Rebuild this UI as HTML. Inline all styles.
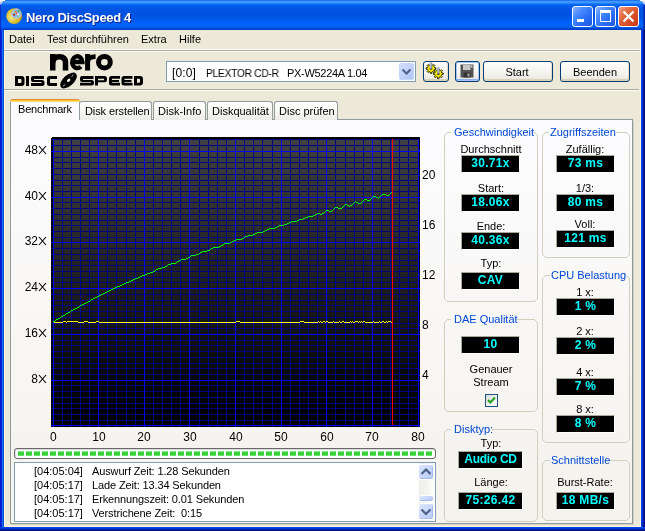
<!DOCTYPE html>
<html><head><meta charset="utf-8"><title>Nero DiscSpeed 4</title>
<style>
*{box-sizing:border-box}
html,body{margin:0;padding:0;width:645px;height:531px;overflow:hidden;background:#fff}
body{position:relative;font-family:"Liberation Sans",sans-serif;font-size:11px;color:#000}
.a{position:absolute}
.t{position:absolute;white-space:nowrap;font-size:11px;line-height:13px;will-change:transform}
.v{position:absolute;white-space:nowrap;font:bold 12px/15px "Liberation Sans",sans-serif;color:#00ffff;text-align:center;letter-spacing:0.3px;will-change:transform}
</style></head><body>
<div class="a" style="left:0;top:0;width:645px;height:531px;background:#0a3ee0;border-radius:7px 7px 0 0"></div>
<div class="a" style="left:0;top:0;width:645px;height:30px;border-radius:7px 7px 0 0;background:linear-gradient(to bottom,#0a50e0 0px,#3d95ff 1px,#3d95ff 3px,#0f70f8 4px,#0062f2 5px,#0056e4 8px,#0052df 14px,#0058e8 19px,#0062fa 22px,#0062fc 27px,#0050e0 28px,#0038b8 30px)"></div>
<div class="a" style="left:0;top:30px;width:4px;height:501px;background:linear-gradient(to right,#0018d0 0,#0018d0 1px,#0a2cd8 1px,#0a2cd8 2px,#1a70f0 2px,#1a70f0 3px,#0050e0 3px)"></div>
<div class="a" style="left:641px;top:30px;width:4px;height:501px;background:linear-gradient(to right,#0040f0 0,#0040f0 1px,#0030d0 1px,#0030d0 2px,#001a9a 2px,#001a9a 3px,#001080 3px)"></div>
<div class="a" style="left:0;top:527px;width:645px;height:4px;background:linear-gradient(to bottom,#0040f0 0,#0040f0 1px,#0035e0 1px,#0035e0 2px,#0020a0 2px,#0020a0 3px,#001480 3px)"></div>
<div class="a" style="left:4px;top:30px;width:637px;height:497px;background:#ece9d8"></div>
<div class="a" style="left:4px;top:30px;width:1px;height:497px;background:#fff6da"></div>
<div class="a" style="left:640px;top:30px;width:1px;height:497px;background:#fff5d8"></div>
<div class="a" style="left:4px;top:526px;width:637px;height:1px;background:#fff5d8"></div>
<div class="a" style="left:0;top:0;width:5px;height:1px;background:#fbf6e0"></div>
<div class="a" style="left:0;top:1px;width:3px;height:1px;background:#e0e4f4"></div>
<div class="a" style="left:0;top:2px;width:2px;height:2px;background:#b0c4f4"></div>
<div class="a" style="left:640px;top:0;width:5px;height:1px;background:#fbf6e0"></div>
<div class="a" style="left:642px;top:1px;width:3px;height:1px;background:#e0e4f4"></div>
<div class="a" style="left:643px;top:2px;width:2px;height:2px;background:#b0c4f4"></div>
<div class="a" style="left:0;top:5px;width:1px;height:25px;background:#0a30c8"></div>
<div class="a" style="left:643px;top:5px;width:2px;height:25px;background:linear-gradient(to right,#0840d8,#0020a8)"></div>
<svg class="a" style="left:4px;top:6px" width="20" height="20" viewBox="0 0 20 20">
<defs><radialGradient id="gd" cx="0.35" cy="0.55" r="0.75"><stop offset="0" stop-color="#f4ea90"/><stop offset="0.5" stop-color="#dcc030"/><stop offset="1" stop-color="#a88c10"/></radialGradient></defs>
<circle cx="10.2" cy="10.2" r="7.9" fill="url(#gd)"/>
<circle cx="12.4" cy="7.6" r="4.6" fill="#7cc0ee" stroke="#b8bcc4" stroke-width="1.3"/>
<path d="M11 4.8 L12.8 7.4 L13.8 9.4" stroke="#f07040" stroke-width="1.5" fill="none"/>
<path d="M13.6 4.6 L15.6 5.6" stroke="#30a040" stroke-width="1.3"/>
<path d="M9.6 7.8 L10.6 9.6" stroke="#c01010" stroke-width="1.5"/>
<circle cx="9.8" cy="6.4" r="0.7" fill="#f0e020"/>
<circle cx="14.2" cy="8.6" r="1" fill="#ffffff"/>
</svg>
<div class="a" style="left:26px;top:10px;font:bold 13px 'Liberation Sans',sans-serif;color:#fff;text-shadow:1px 1px 0 #0a1e8c;white-space:nowrap;letter-spacing:-0.35px;will-change:transform">Nero DiscSpeed 4</div>
<div class="a" style="left:572px;top:6px;width:21px;height:21px;border:1px solid #fff;border-radius:3px;background:linear-gradient(135deg,#8cb4ff 0%,#4a8cff 30%,#2a6cf4 65%,#1f58e0 100%)"></div>
<div class="a" style="left:595px;top:6px;width:21px;height:21px;border:1px solid #fff;border-radius:3px;background:linear-gradient(135deg,#8cb4ff 0%,#4a8cff 30%,#2a6cf4 65%,#1f58e0 100%)"></div>
<div class="a" style="left:618px;top:6px;width:21px;height:21px;border:1px solid #fff;border-radius:3px;background:linear-gradient(135deg,#f0a088 0%,#e2683e 35%,#d44a24 70%,#c83818 100%)"></div>
<div class="a" style="left:577px;top:19px;width:7px;height:3px;background:#fff"></div>
<div class="a" style="left:600px;top:10px;width:11px;height:12px;border:1px solid #fff;border-top-width:3px"></div>
<svg class="a" style="left:618px;top:6px" width="21" height="21" viewBox="0 0 21 21"><path d="M5.5 5.5 L15.5 15.5 M15.5 5.5 L5.5 15.5" stroke="#fff" stroke-width="2.2"/></svg>
<div class="t" style="left:9px;top:33px;">Datei</div>
<div class="t" style="left:47px;top:33px;">Test durchführen</div>
<div class="t" style="left:141px;top:33px;">Extra</div>
<div class="t" style="left:179px;top:33px;">Hilfe</div>
<div class="a" style="left:4px;top:49px;width:636px;height:1px;background:#fff"></div>
<div class="a" style="left:4px;top:50px;width:636px;height:1px;background:#aca899"></div>
<div class="a" style="left:4px;top:51px;width:636px;height:1px;background:#fff"></div>
<div class="a" style="left:4px;top:89px;width:635px;height:1px;background:#aca899"></div>
<div class="a" style="left:4px;top:90px;width:635px;height:1px;background:#fff"></div>
<svg class="a" style="left:0;top:0" width="160" height="95" viewBox="0 0 160 95">
<g fill="none" stroke="#000">
<path d="M52.75 70.5 V54" stroke-width="5.5"/>
<path d="M52.75 63 Q52.75 56.75 59.2 56.75 Q65.5 56.75 65.5 62.5 V70.5" stroke-width="5.5"/>
<path d="M72.2 62 H82.4 A5.1 5.9 0 1 0 80.8 66.5" stroke-width="4.4"/>
<path d="M87.6 70.5 V54" stroke-width="5"/>
<path d="M87.6 62 Q88 56.6 95.6 56.6" stroke-width="4.6"/>
<ellipse cx="104.4" cy="62.2" rx="5.9" ry="5.8" stroke-width="5"/>
</g>
<g fill="#000">
<!-- D -->
<path d="M15 76 H21.5 Q24.5 76 24.5 79 V83 Q24.5 86 21.5 86 H15 Z M18 79 V83 H20.5 Q21.5 83 21.5 82 V80 Q21.5 79 20.5 79 Z" fill-rule="evenodd"/>
<rect x="26" y="76" width="3" height="10"/>
<!-- S -->
<path d="M33 76 H44 V79 H34 V80 H42 Q44.5 80 44.5 82.5 V83.5 Q44.5 86 42 86 H31 V83 H41.5 V82 H33 Q31 82 31 80 V78 Q31 76 33 76 Z"/>
<!-- C -->
<path d="M49.5 76 H57 V79 H50 V83 H57 V86 H49.5 Q47 86 47 83.5 V78.5 Q47 76 49.5 76 Z"/>
<!-- S -->
<path d="M82 76 H93.5 V79 H83 V80 H91.5 Q94 80 94 82.5 V83.5 Q94 85.5 91.5 85.5 H80 V82.8 H91 V82 H82 Q80 82 80 80 V78 Q80 76 82 76 Z"/>
<!-- P -->
<path d="M95 76 H104.5 Q107 76 107 78.5 V80 Q107 82.3 104.5 82.3 H98 V85.5 H95 Z M98 78.7 V80.2 H104 V78.7 Z" fill-rule="evenodd"/>
<!-- E -->
<path d="M111.5 76 H120 V78.7 H112 V80 H119 V82 H112 V82.8 H120 V85.5 H111.5 Q109 85.5 109 83 V78.5 Q109 76 111.5 76 Z"/>
<path d="M124 76 H132.5 V78.7 H124.5 V80 H131.5 V82 H124.5 V82.8 H132.5 V85.5 H124 Q121.5 85.5 121.5 83 V78.5 Q121.5 76 124 76 Z"/>
<!-- D -->
<path d="M134 76 H140 Q143 76 143 79 V82.5 Q143 85.5 140 85.5 H134 Z M137 78.7 V82.8 H139 Q140 82.8 140 81.8 V79.7 Q140 78.7 139 78.7 Z" fill-rule="evenodd"/>
</g>
<g transform="rotate(-42 68.5 80.5)">
<ellipse cx="68.5" cy="80.5" rx="10.2" ry="5.3" fill="#000"/>
<ellipse cx="68.8" cy="80.5" rx="2" ry="1.3" fill="#f4f2ea"/>
<path d="M60.5 81.2 H63.5 M73.5 79.6 H76" stroke="#e8e6dc" stroke-width="0.8"/>
</g>
</svg>
<div class="a" style="left:166px;top:61px;width:250px;height:21px;border:1px solid #7f9db9;background:#fff"></div>
<div class="t" style="left:172px;top:67px;font-size:12px;letter-spacing:0.1px">[0:0]</div>
<div class="t" style="left:206px;top:67px;letter-spacing:-0.3px;transform:scaleX(0.93);transform-origin:0 0">PLEXTOR CD-R</div>
<div class="t" style="left:287px;top:67px;letter-spacing:-0.3px">PX-W5224A 1.04</div>
<div class="a" style="left:399px;top:63px;width:15px;height:17px;border-radius:2px;background:linear-gradient(135deg,#d2defc 0%,#c0d2fa 50%,#b0c6f6 100%);border:1px solid #c8d6fa"></div>
<svg class="a" style="left:399px;top:63px" width="15" height="17" viewBox="0 0 15 17"><path d="M3.5 6.5 L7.5 10.5 L11.5 6.5" stroke="#4d6185" stroke-width="2" fill="none"/></svg>
<div class="a" style="left:423px;top:61px;width:26px;height:21px;border:1px solid #003c74;border-radius:3px;background:linear-gradient(to bottom,#fff 0%,#f4f3ee 60%,#e8e6dc 100%);box-shadow: inset 0 -2px 0 #d8d2bd, inset -1px 0 0 #e2ddc8;"></div>
<div class="a" style="left:455px;top:61px;width:25px;height:21px;border:1px solid #003c74;border-radius:3px;background:linear-gradient(to bottom,#fff 0%,#f4f3ee 60%,#e8e6dc 100%);box-shadow: inset 0 0 0 1px #a8c4f8, inset 0 -2px 0 #8cb0f0;"></div>
<div class="a" style="left:483px;top:61px;width:70px;height:21px;border:1px solid #003c74;border-radius:3px;background:linear-gradient(to bottom,#fff 0%,#f4f3ee 60%,#e8e6dc 100%);box-shadow: inset 0 -2px 0 #d8d2bd, inset -1px 0 0 #e2ddc8;"></div>
<div class="t" style="left:457.0px;width:120px;text-align:center;top:66px;">Start</div>
<div class="a" style="left:560px;top:61px;width:70px;height:21px;border:1px solid #003c74;border-radius:3px;background:linear-gradient(to bottom,#fff 0%,#f4f3ee 60%,#e8e6dc 100%);box-shadow: inset 0 -2px 0 #d8d2bd, inset -1px 0 0 #e2ddc8;"></div>
<div class="t" style="left:535.0px;width:120px;text-align:center;top:66px;">Beenden</div>
<svg class="a" style="left:423px;top:61px" width="26" height="21" viewBox="0 0 26 21">
<path d="M11.52,6.73 L12.95,6.81 L12.95,8.19 L11.52,8.27 L11.03,9.44 L11.99,10.52 L11.02,11.49 L9.94,10.53 L8.77,11.02 L8.69,12.45 L7.31,12.45 L7.23,11.02 L6.06,10.53 L4.98,11.49 L4.01,10.52 L4.97,9.44 L4.48,8.27 L3.05,8.19 L3.05,6.81 L4.48,6.73 L4.97,5.56 L4.01,4.48 L4.98,3.51 L6.06,4.47 L7.23,3.98 L7.31,2.55 L8.69,2.55 L8.77,3.98 L9.94,4.47 L11.02,3.51 L11.99,4.48 L11.03,5.56 Z" fill="#f4e800" stroke="#1a1a00" stroke-width="0.9"/>
<path d="M18.82,11.93 L20.25,12.01 L20.25,13.39 L18.82,13.47 L18.33,14.64 L19.29,15.72 L18.32,16.69 L17.24,15.73 L16.07,16.22 L15.99,17.65 L14.61,17.65 L14.53,16.22 L13.36,15.73 L12.28,16.69 L11.31,15.72 L12.27,14.64 L11.78,13.47 L10.35,13.39 L10.35,12.01 L11.78,11.93 L12.27,10.76 L11.31,9.68 L12.28,8.71 L13.36,9.67 L14.53,9.18 L14.61,7.75 L15.99,7.75 L16.07,9.18 L17.24,9.67 L18.32,8.71 L19.29,9.68 L18.33,10.76 Z" fill="#f4e800" stroke="#1a1a00" stroke-width="0.9"/>
<circle cx="8" cy="7.5" r="1.3" fill="#303000"/><circle cx="15.3" cy="12.7" r="1.3" fill="#303000"/>
<rect x="6.8" y="1.5" width="2.4" height="6" fill="#8890a0"/><rect x="7.3" y="1.5" width="0.9" height="6" fill="#d0d4dc"/>
<rect x="14.1" y="6.5" width="2.4" height="6" fill="#8890a0"/><rect x="14.6" y="6.5" width="0.9" height="6" fill="#d0d4dc"/>
</svg>
<svg class="a" style="left:460px;top:64px" width="15" height="15" viewBox="0 0 15 15">
<rect x="0.5" y="0.5" width="13" height="13" fill="#555" />
<rect x="3" y="1" width="7.5" height="5" fill="#c8c8c8"/>
<rect x="3.5" y="8.5" width="7" height="5" fill="#333"/><rect x="7.5" y="9.5" width="2" height="3" fill="#aaa"/>
<rect x="11" y="1.5" width="1.5" height="2" fill="#ddd"/>
</svg>
<div class="a" style="left:10px;top:119px;width:623px;height:405px;border:1px solid #919b9c;background:linear-gradient(to bottom,#fcfcfe 0%,#f4f3ee 90%,#f4f3ee 100%)"></div>
<div class="a" style="left:633px;top:121px;width:1px;height:404px;background:#d4d0c0"></div>
<div class="a" style="left:11px;top:524px;width:623px;height:1px;background:#d8d4c4"></div>
<div class="a" style="left:632px;top:120px;width:1px;height:404px;background:#919b9c"></div>
<div class="a" style="left:79px;top:101px;width:73px;height:19px;border:1px solid #919b9c;border-bottom:none;border-radius:3px 3px 0 0;background:linear-gradient(to bottom,#fff 0%,#fcfcfb 30%,#ecebe5 100%)"></div>
<div class="t" style="left:85px;top:105px;letter-spacing:-0.1px">Disk erstellen</div>
<div class="a" style="left:153px;top:101px;width:53px;height:19px;border:1px solid #919b9c;border-bottom:none;border-radius:3px 3px 0 0;background:linear-gradient(to bottom,#fff 0%,#fcfcfb 30%,#ecebe5 100%)"></div>
<div class="t" style="left:158px;top:105px;">Disk-Info</div>
<div class="a" style="left:207px;top:101px;width:66px;height:19px;border:1px solid #919b9c;border-bottom:none;border-radius:3px 3px 0 0;background:linear-gradient(to bottom,#fff 0%,#fcfcfb 30%,#ecebe5 100%)"></div>
<div class="t" style="left:212px;top:105px;">Diskqualität</div>
<div class="a" style="left:274px;top:101px;width:64px;height:19px;border:1px solid #919b9c;border-bottom:none;border-radius:3px 3px 0 0;background:linear-gradient(to bottom,#fff 0%,#fcfcfb 30%,#ecebe5 100%)"></div>
<div class="t" style="left:279px;top:105px;">Disc prüfen</div>
<div class="a" style="left:10px;top:99px;width:70px;height:21px;border:1px solid #919b9c;border-bottom:none;border-top:none;border-radius:3px 3px 0 0;background:#fcfcfe"></div>
<div class="a" style="left:10px;top:99px;width:70px;height:3px;border-radius:3px 3px 0 0;background:linear-gradient(to bottom,#e68b2c 0,#e68b2c 1px,#ffc73c 1px,#ffc73c 2px,#ffd870 2px)"></div>
<div class="t" style="left:18px;top:103px;letter-spacing:-0.2px">Benchmark</div>
<svg class="a" width="369" height="290" viewBox="51 137 369 290" style="left:51px;top:137px" shape-rendering="crispEdges">
<defs><linearGradient id="bg" x1="0" y1="0" x2="0" y2="1"><stop offset="0" stop-color="#404040"/><stop offset="0.96" stop-color="#000"/><stop offset="1" stop-color="#000"/></linearGradient></defs>
<rect x="51" y="137" width="369" height="290" fill="#000"/>
<rect x="53" y="139" width="366" height="287" fill="url(#bg)"/>
<rect x="51" y="137" width="1" height="1" fill="#e8e8e8"/>
<rect x="51" y="420" width="368" height="1" fill="#000080"/>
<rect x="51" y="414" width="368" height="1" fill="#000080"/>
<rect x="51" y="408" width="368" height="1" fill="#000080"/>
<rect x="51" y="403" width="368" height="1" fill="#000080"/>
<rect x="51" y="397" width="368" height="1" fill="#000080"/>
<rect x="51" y="391" width="368" height="1" fill="#000080"/>
<rect x="51" y="385" width="368" height="1" fill="#000080"/>
<rect x="51" y="374" width="368" height="1" fill="#000080"/>
<rect x="51" y="368" width="368" height="1" fill="#000080"/>
<rect x="51" y="363" width="368" height="1" fill="#000080"/>
<rect x="51" y="357" width="368" height="1" fill="#000080"/>
<rect x="51" y="351" width="368" height="1" fill="#000080"/>
<rect x="51" y="345" width="368" height="1" fill="#000080"/>
<rect x="51" y="340" width="368" height="1" fill="#000080"/>
<rect x="51" y="328" width="368" height="1" fill="#000080"/>
<rect x="51" y="323" width="368" height="1" fill="#000080"/>
<rect x="51" y="317" width="368" height="1" fill="#000080"/>
<rect x="51" y="311" width="368" height="1" fill="#000080"/>
<rect x="51" y="305" width="368" height="1" fill="#000080"/>
<rect x="51" y="300" width="368" height="1" fill="#000080"/>
<rect x="51" y="294" width="368" height="1" fill="#000080"/>
<rect x="51" y="282" width="368" height="1" fill="#000080"/>
<rect x="51" y="277" width="368" height="1" fill="#000080"/>
<rect x="51" y="271" width="368" height="1" fill="#000080"/>
<rect x="51" y="265" width="368" height="1" fill="#000080"/>
<rect x="51" y="260" width="368" height="1" fill="#000080"/>
<rect x="51" y="254" width="368" height="1" fill="#000080"/>
<rect x="51" y="248" width="368" height="1" fill="#000080"/>
<rect x="51" y="237" width="368" height="1" fill="#000080"/>
<rect x="51" y="231" width="368" height="1" fill="#000080"/>
<rect x="51" y="225" width="368" height="1" fill="#000080"/>
<rect x="51" y="220" width="368" height="1" fill="#000080"/>
<rect x="51" y="214" width="368" height="1" fill="#000080"/>
<rect x="51" y="208" width="368" height="1" fill="#000080"/>
<rect x="51" y="202" width="368" height="1" fill="#000080"/>
<rect x="51" y="191" width="368" height="1" fill="#000080"/>
<rect x="51" y="185" width="368" height="1" fill="#000080"/>
<rect x="51" y="180" width="368" height="1" fill="#000080"/>
<rect x="51" y="174" width="368" height="1" fill="#000080"/>
<rect x="51" y="168" width="368" height="1" fill="#000080"/>
<rect x="51" y="162" width="368" height="1" fill="#000080"/>
<rect x="51" y="157" width="368" height="1" fill="#000080"/>
<rect x="51" y="145" width="368" height="1" fill="#000080"/>
<rect x="51" y="139" width="368" height="1" fill="#000080"/>
<rect x="62" y="139" width="1" height="288" fill="#000080"/>
<rect x="71" y="139" width="1" height="288" fill="#000080"/>
<rect x="80" y="139" width="1" height="288" fill="#000080"/>
<rect x="89" y="139" width="1" height="288" fill="#000080"/>
<rect x="107" y="139" width="1" height="288" fill="#000080"/>
<rect x="116" y="139" width="1" height="288" fill="#000080"/>
<rect x="126" y="139" width="1" height="288" fill="#000080"/>
<rect x="135" y="139" width="1" height="288" fill="#000080"/>
<rect x="153" y="139" width="1" height="288" fill="#000080"/>
<rect x="162" y="139" width="1" height="288" fill="#000080"/>
<rect x="171" y="139" width="1" height="288" fill="#000080"/>
<rect x="180" y="139" width="1" height="288" fill="#000080"/>
<rect x="199" y="139" width="1" height="288" fill="#000080"/>
<rect x="208" y="139" width="1" height="288" fill="#000080"/>
<rect x="217" y="139" width="1" height="288" fill="#000080"/>
<rect x="226" y="139" width="1" height="288" fill="#000080"/>
<rect x="244" y="139" width="1" height="288" fill="#000080"/>
<rect x="253" y="139" width="1" height="288" fill="#000080"/>
<rect x="262" y="139" width="1" height="288" fill="#000080"/>
<rect x="272" y="139" width="1" height="288" fill="#000080"/>
<rect x="290" y="139" width="1" height="288" fill="#000080"/>
<rect x="299" y="139" width="1" height="288" fill="#000080"/>
<rect x="308" y="139" width="1" height="288" fill="#000080"/>
<rect x="317" y="139" width="1" height="288" fill="#000080"/>
<rect x="335" y="139" width="1" height="288" fill="#000080"/>
<rect x="345" y="139" width="1" height="288" fill="#000080"/>
<rect x="354" y="139" width="1" height="288" fill="#000080"/>
<rect x="363" y="139" width="1" height="288" fill="#000080"/>
<rect x="381" y="139" width="1" height="288" fill="#000080"/>
<rect x="390" y="139" width="1" height="288" fill="#000080"/>
<rect x="399" y="139" width="1" height="288" fill="#000080"/>
<rect x="408" y="139" width="1" height="288" fill="#000080"/>
<rect x="51" y="425" width="369" height="1" fill="#0000ff"/>
<rect x="51" y="380" width="369" height="1" fill="#0000ff"/>
<rect x="51" y="334" width="369" height="1" fill="#0000ff"/>
<rect x="51" y="288" width="369" height="1" fill="#0000ff"/>
<rect x="51" y="242" width="369" height="1" fill="#0000ff"/>
<rect x="51" y="197" width="369" height="1" fill="#0000ff"/>
<rect x="51" y="151" width="369" height="1" fill="#0000ff"/>
<rect x="53" y="139" width="1" height="288" fill="#0000ff"/>
<rect x="98" y="139" width="1" height="288" fill="#0000ff"/>
<rect x="144" y="139" width="1" height="288" fill="#0000ff"/>
<rect x="189" y="139" width="1" height="288" fill="#0000ff"/>
<rect x="235" y="139" width="1" height="288" fill="#0000ff"/>
<rect x="281" y="139" width="1" height="288" fill="#0000ff"/>
<rect x="326" y="139" width="1" height="288" fill="#0000ff"/>
<rect x="372" y="139" width="1" height="288" fill="#0000ff"/>
<rect x="418" y="139" width="1" height="288" fill="#0000ff"/>
<rect x="418" y="400" width="2" height="1" fill="#0000ff"/>
<rect x="418" y="375" width="2" height="1" fill="#0000ff"/>
<rect x="418" y="350" width="2" height="1" fill="#0000ff"/>
<rect x="418" y="325" width="2" height="1" fill="#0000ff"/>
<rect x="418" y="300" width="2" height="1" fill="#0000ff"/>
<rect x="418" y="275" width="2" height="1" fill="#0000ff"/>
<rect x="418" y="250" width="2" height="1" fill="#0000ff"/>
<rect x="418" y="225" width="2" height="1" fill="#0000ff"/>
<rect x="418" y="200" width="2" height="1" fill="#0000ff"/>
<rect x="418" y="175" width="2" height="1" fill="#0000ff"/>
<rect x="418" y="150" width="2" height="1" fill="#0000ff"/>
<g fill="#ffff00"><rect x="53" y="321" width="1" height="1"/><rect x="54" y="322" width="1" height="1"/><rect x="55" y="322" width="1" height="1"/><rect x="56" y="322" width="1" height="1"/><rect x="57" y="322" width="1" height="1"/><rect x="58" y="322" width="1" height="1"/><rect x="59" y="322" width="1" height="1"/><rect x="60" y="322" width="1" height="1"/><rect x="61" y="322" width="1" height="1"/><rect x="62" y="322" width="1" height="1"/><rect x="63" y="321" width="1" height="1"/><rect x="64" y="321" width="1" height="1"/><rect x="65" y="321" width="1" height="1"/><rect x="66" y="322" width="1" height="1"/><rect x="67" y="321" width="1" height="1"/><rect x="68" y="321" width="1" height="1"/><rect x="69" y="321" width="1" height="1"/><rect x="70" y="321" width="1" height="1"/><rect x="71" y="321" width="1" height="1"/><rect x="72" y="321" width="1" height="1"/><rect x="73" y="321" width="1" height="1"/><rect x="74" y="321" width="1" height="1"/><rect x="75" y="321" width="1" height="1"/><rect x="76" y="321" width="1" height="1"/><rect x="77" y="321" width="1" height="1"/><rect x="78" y="322" width="1" height="1"/><rect x="79" y="322" width="1" height="1"/><rect x="80" y="322" width="1" height="1"/><rect x="81" y="322" width="1" height="1"/><rect x="82" y="322" width="1" height="1"/><rect x="83" y="322" width="1" height="1"/><rect x="84" y="321" width="1" height="1"/><rect x="85" y="321" width="1" height="1"/><rect x="86" y="321" width="1" height="1"/><rect x="87" y="321" width="1" height="1"/><rect x="88" y="322" width="1" height="1"/><rect x="89" y="322" width="1" height="1"/><rect x="90" y="322" width="1" height="1"/><rect x="91" y="322" width="1" height="1"/><rect x="92" y="322" width="1" height="1"/><rect x="93" y="322" width="1" height="1"/><rect x="94" y="322" width="1" height="1"/><rect x="95" y="322" width="1" height="1"/><rect x="96" y="321" width="1" height="1"/><rect x="97" y="321" width="1" height="1"/><rect x="98" y="321" width="1" height="1"/><rect x="99" y="322" width="1" height="1"/><rect x="100" y="322" width="1" height="1"/><rect x="101" y="322" width="1" height="1"/><rect x="102" y="322" width="1" height="1"/><rect x="103" y="322" width="1" height="1"/><rect x="104" y="322" width="1" height="1"/><rect x="105" y="322" width="1" height="1"/><rect x="106" y="322" width="1" height="1"/><rect x="107" y="322" width="1" height="1"/><rect x="108" y="322" width="1" height="1"/><rect x="109" y="322" width="1" height="1"/><rect x="110" y="322" width="1" height="1"/><rect x="111" y="322" width="1" height="1"/><rect x="112" y="322" width="1" height="1"/><rect x="113" y="322" width="1" height="1"/><rect x="114" y="322" width="1" height="1"/><rect x="115" y="322" width="1" height="1"/><rect x="116" y="322" width="1" height="1"/><rect x="117" y="322" width="1" height="1"/><rect x="118" y="322" width="1" height="1"/><rect x="119" y="322" width="1" height="1"/><rect x="120" y="322" width="1" height="1"/><rect x="121" y="322" width="1" height="1"/><rect x="122" y="322" width="1" height="1"/><rect x="123" y="322" width="1" height="1"/><rect x="124" y="322" width="1" height="1"/><rect x="125" y="322" width="1" height="1"/><rect x="126" y="322" width="1" height="1"/><rect x="127" y="322" width="1" height="1"/><rect x="128" y="322" width="1" height="1"/><rect x="129" y="322" width="1" height="1"/><rect x="130" y="322" width="1" height="1"/><rect x="131" y="322" width="1" height="1"/><rect x="132" y="322" width="1" height="1"/><rect x="133" y="322" width="1" height="1"/><rect x="134" y="322" width="1" height="1"/><rect x="135" y="322" width="1" height="1"/><rect x="136" y="322" width="1" height="1"/><rect x="137" y="322" width="1" height="1"/><rect x="138" y="322" width="1" height="1"/><rect x="139" y="322" width="1" height="1"/><rect x="140" y="322" width="1" height="1"/><rect x="141" y="322" width="1" height="1"/><rect x="142" y="322" width="1" height="1"/><rect x="143" y="322" width="1" height="1"/><rect x="144" y="322" width="1" height="1"/><rect x="145" y="322" width="1" height="1"/><rect x="146" y="322" width="1" height="1"/><rect x="147" y="322" width="1" height="1"/><rect x="148" y="322" width="1" height="1"/><rect x="149" y="322" width="1" height="1"/><rect x="150" y="322" width="1" height="1"/><rect x="151" y="322" width="1" height="1"/><rect x="152" y="322" width="1" height="1"/><rect x="153" y="322" width="1" height="1"/><rect x="154" y="322" width="1" height="1"/><rect x="155" y="322" width="1" height="1"/><rect x="156" y="322" width="1" height="1"/><rect x="157" y="322" width="1" height="1"/><rect x="158" y="322" width="1" height="1"/><rect x="159" y="322" width="1" height="1"/><rect x="160" y="322" width="1" height="1"/><rect x="161" y="322" width="1" height="1"/><rect x="162" y="322" width="1" height="1"/><rect x="163" y="322" width="1" height="1"/><rect x="164" y="322" width="1" height="1"/><rect x="165" y="322" width="1" height="1"/><rect x="166" y="322" width="1" height="1"/><rect x="167" y="322" width="1" height="1"/><rect x="168" y="322" width="1" height="1"/><rect x="169" y="322" width="1" height="1"/><rect x="170" y="322" width="1" height="1"/><rect x="171" y="322" width="1" height="1"/><rect x="172" y="322" width="1" height="1"/><rect x="173" y="322" width="1" height="1"/><rect x="174" y="322" width="1" height="1"/><rect x="175" y="322" width="1" height="1"/><rect x="176" y="322" width="1" height="1"/><rect x="177" y="322" width="1" height="1"/><rect x="178" y="322" width="1" height="1"/><rect x="179" y="322" width="1" height="1"/><rect x="180" y="322" width="1" height="1"/><rect x="181" y="322" width="1" height="1"/><rect x="182" y="322" width="1" height="1"/><rect x="183" y="322" width="1" height="1"/><rect x="184" y="322" width="1" height="1"/><rect x="185" y="322" width="1" height="1"/><rect x="186" y="322" width="1" height="1"/><rect x="187" y="322" width="1" height="1"/><rect x="188" y="322" width="1" height="1"/><rect x="189" y="322" width="1" height="1"/><rect x="190" y="322" width="1" height="1"/><rect x="191" y="322" width="1" height="1"/><rect x="192" y="322" width="1" height="1"/><rect x="193" y="322" width="1" height="1"/><rect x="194" y="322" width="1" height="1"/><rect x="195" y="322" width="1" height="1"/><rect x="196" y="322" width="1" height="1"/><rect x="197" y="322" width="1" height="1"/><rect x="198" y="322" width="1" height="1"/><rect x="199" y="322" width="1" height="1"/><rect x="200" y="322" width="1" height="1"/><rect x="201" y="322" width="1" height="1"/><rect x="202" y="322" width="1" height="1"/><rect x="203" y="322" width="1" height="1"/><rect x="204" y="322" width="1" height="1"/><rect x="205" y="322" width="1" height="1"/><rect x="206" y="322" width="1" height="1"/><rect x="207" y="322" width="1" height="1"/><rect x="208" y="322" width="1" height="1"/><rect x="209" y="322" width="1" height="1"/><rect x="210" y="322" width="1" height="1"/><rect x="211" y="322" width="1" height="1"/><rect x="212" y="322" width="1" height="1"/><rect x="213" y="322" width="1" height="1"/><rect x="214" y="322" width="1" height="1"/><rect x="215" y="322" width="1" height="1"/><rect x="216" y="322" width="1" height="1"/><rect x="217" y="322" width="1" height="1"/><rect x="218" y="322" width="1" height="1"/><rect x="219" y="322" width="1" height="1"/><rect x="220" y="322" width="1" height="1"/><rect x="221" y="322" width="1" height="1"/><rect x="222" y="322" width="1" height="1"/><rect x="223" y="322" width="1" height="1"/><rect x="224" y="322" width="1" height="1"/><rect x="225" y="322" width="1" height="1"/><rect x="226" y="322" width="1" height="1"/><rect x="227" y="322" width="1" height="1"/><rect x="228" y="322" width="1" height="1"/><rect x="229" y="322" width="1" height="1"/><rect x="230" y="322" width="1" height="1"/><rect x="231" y="322" width="1" height="1"/><rect x="232" y="322" width="1" height="1"/><rect x="233" y="322" width="1" height="1"/><rect x="234" y="322" width="1" height="1"/><rect x="235" y="322" width="1" height="1"/><rect x="236" y="321" width="1" height="1"/><rect x="237" y="321" width="1" height="1"/><rect x="238" y="321" width="1" height="1"/><rect x="239" y="321" width="1" height="1"/><rect x="240" y="322" width="1" height="1"/><rect x="241" y="322" width="1" height="1"/><rect x="242" y="322" width="1" height="1"/><rect x="243" y="322" width="1" height="1"/><rect x="244" y="322" width="1" height="1"/><rect x="245" y="322" width="1" height="1"/><rect x="246" y="322" width="1" height="1"/><rect x="247" y="322" width="1" height="1"/><rect x="248" y="322" width="1" height="1"/><rect x="249" y="322" width="1" height="1"/><rect x="250" y="322" width="1" height="1"/><rect x="251" y="322" width="1" height="1"/><rect x="252" y="322" width="1" height="1"/><rect x="253" y="322" width="1" height="1"/><rect x="254" y="322" width="1" height="1"/><rect x="255" y="322" width="1" height="1"/><rect x="256" y="322" width="1" height="1"/><rect x="257" y="322" width="1" height="1"/><rect x="258" y="322" width="1" height="1"/><rect x="259" y="322" width="1" height="1"/><rect x="260" y="322" width="1" height="1"/><rect x="261" y="322" width="1" height="1"/><rect x="262" y="322" width="1" height="1"/><rect x="263" y="322" width="1" height="1"/><rect x="264" y="322" width="1" height="1"/><rect x="265" y="322" width="1" height="1"/><rect x="266" y="322" width="1" height="1"/><rect x="267" y="322" width="1" height="1"/><rect x="268" y="322" width="1" height="1"/><rect x="269" y="322" width="1" height="1"/><rect x="270" y="322" width="1" height="1"/><rect x="271" y="322" width="1" height="1"/><rect x="272" y="322" width="1" height="1"/><rect x="273" y="322" width="1" height="1"/><rect x="274" y="322" width="1" height="1"/><rect x="275" y="322" width="1" height="1"/><rect x="276" y="322" width="1" height="1"/><rect x="277" y="322" width="1" height="1"/><rect x="278" y="322" width="1" height="1"/><rect x="279" y="322" width="1" height="1"/><rect x="280" y="322" width="1" height="1"/><rect x="281" y="322" width="1" height="1"/><rect x="282" y="322" width="1" height="1"/><rect x="283" y="322" width="1" height="1"/><rect x="284" y="322" width="1" height="1"/><rect x="285" y="322" width="1" height="1"/><rect x="286" y="322" width="1" height="1"/><rect x="287" y="322" width="1" height="1"/><rect x="288" y="322" width="1" height="1"/><rect x="289" y="322" width="1" height="1"/><rect x="290" y="322" width="1" height="1"/><rect x="291" y="322" width="1" height="1"/><rect x="292" y="322" width="1" height="1"/><rect x="293" y="322" width="1" height="1"/><rect x="294" y="322" width="1" height="1"/><rect x="295" y="322" width="1" height="1"/><rect x="296" y="322" width="1" height="1"/><rect x="297" y="322" width="1" height="1"/><rect x="298" y="322" width="1" height="1"/><rect x="299" y="322" width="1" height="1"/><rect x="300" y="321" width="1" height="1"/><rect x="301" y="321" width="1" height="1"/><rect x="302" y="321" width="1" height="1"/><rect x="303" y="321" width="1" height="1"/><rect x="304" y="322" width="1" height="1"/><rect x="305" y="322" width="1" height="1"/><rect x="306" y="322" width="1" height="1"/><rect x="307" y="322" width="1" height="1"/><rect x="308" y="322" width="1" height="1"/><rect x="309" y="322" width="1" height="1"/><rect x="310" y="322" width="1" height="1"/><rect x="311" y="322" width="1" height="1"/><rect x="312" y="322" width="1" height="1"/><rect x="313" y="322" width="1" height="1"/><rect x="314" y="322" width="1" height="1"/><rect x="315" y="322" width="1" height="1"/><rect x="316" y="322" width="1" height="1"/><rect x="317" y="322" width="1" height="1"/><rect x="318" y="321" width="1" height="1"/><rect x="319" y="322" width="1" height="1"/><rect x="320" y="321" width="1" height="1"/><rect x="321" y="322" width="1" height="1"/><rect x="322" y="322" width="1" height="1"/><rect x="323" y="321" width="1" height="1"/><rect x="324" y="321" width="1" height="1"/><rect x="325" y="322" width="1" height="1"/><rect x="326" y="321" width="1" height="1"/><rect x="327" y="321" width="1" height="1"/><rect x="328" y="322" width="1" height="1"/><rect x="329" y="322" width="1" height="1"/><rect x="330" y="322" width="1" height="1"/><rect x="331" y="322" width="1" height="1"/><rect x="332" y="322" width="1" height="1"/><rect x="333" y="321" width="1" height="1"/><rect x="334" y="322" width="1" height="1"/><rect x="335" y="322" width="1" height="1"/><rect x="336" y="322" width="1" height="1"/><rect x="337" y="322" width="1" height="1"/><rect x="338" y="322" width="1" height="1"/><rect x="339" y="321" width="1" height="1"/><rect x="340" y="322" width="1" height="1"/><rect x="341" y="322" width="1" height="1"/><rect x="342" y="321" width="1" height="1"/><rect x="343" y="321" width="1" height="1"/><rect x="344" y="322" width="1" height="1"/><rect x="345" y="322" width="1" height="1"/><rect x="346" y="322" width="1" height="1"/><rect x="347" y="322" width="1" height="1"/><rect x="348" y="322" width="1" height="1"/><rect x="349" y="322" width="1" height="1"/><rect x="350" y="321" width="1" height="1"/><rect x="351" y="322" width="1" height="1"/><rect x="352" y="321" width="1" height="1"/><rect x="353" y="322" width="1" height="1"/><rect x="354" y="322" width="1" height="1"/><rect x="355" y="321" width="1" height="1"/><rect x="356" y="321" width="1" height="1"/><rect x="357" y="321" width="1" height="1"/><rect x="358" y="322" width="1" height="1"/><rect x="359" y="321" width="1" height="1"/><rect x="360" y="322" width="1" height="1"/><rect x="361" y="321" width="1" height="1"/><rect x="362" y="322" width="1" height="1"/><rect x="363" y="321" width="1" height="1"/><rect x="364" y="321" width="1" height="1"/><rect x="365" y="322" width="1" height="1"/><rect x="366" y="322" width="1" height="1"/><rect x="367" y="322" width="1" height="1"/><rect x="368" y="322" width="1" height="1"/><rect x="369" y="322" width="1" height="1"/><rect x="370" y="322" width="1" height="1"/><rect x="371" y="322" width="1" height="1"/><rect x="372" y="322" width="1" height="1"/><rect x="373" y="321" width="1" height="1"/><rect x="374" y="322" width="1" height="1"/><rect x="375" y="322" width="1" height="1"/><rect x="376" y="322" width="1" height="1"/><rect x="377" y="322" width="1" height="1"/><rect x="378" y="322" width="1" height="1"/><rect x="379" y="321" width="1" height="1"/><rect x="380" y="322" width="1" height="1"/><rect x="381" y="322" width="1" height="1"/><rect x="382" y="321" width="1" height="1"/><rect x="383" y="321" width="1" height="1"/><rect x="384" y="322" width="1" height="1"/><rect x="385" y="322" width="1" height="1"/><rect x="386" y="321" width="1" height="1"/><rect x="387" y="322" width="1" height="1"/><rect x="388" y="321" width="1" height="1"/><rect x="389" y="321" width="1" height="1"/><rect x="390" y="321" width="1" height="1"/><rect x="391" y="322" width="1" height="1"/><rect x="392" y="322" width="1" height="1"/></g>
<g fill="#00ff00"><rect x="53" y="321" width="1" height="1"/><rect x="54" y="321" width="1" height="1"/><rect x="55" y="320" width="1" height="1"/><rect x="56" y="319" width="1" height="1"/><rect x="57" y="319" width="1" height="1"/><rect x="58" y="318" width="1" height="1"/><rect x="59" y="318" width="1" height="1"/><rect x="60" y="317" width="1" height="1"/><rect x="61" y="316" width="1" height="1"/><rect x="62" y="316" width="1" height="1"/><rect x="63" y="315" width="1" height="1"/><rect x="64" y="315" width="1" height="1"/><rect x="65" y="314" width="1" height="1"/><rect x="66" y="313" width="1" height="1"/><rect x="67" y="313" width="1" height="1"/><rect x="68" y="312" width="1" height="1"/><rect x="69" y="312" width="1" height="1"/><rect x="70" y="311" width="1" height="1"/><rect x="71" y="310" width="1" height="1"/><rect x="72" y="310" width="1" height="1"/><rect x="73" y="309" width="1" height="1"/><rect x="74" y="309" width="1" height="1"/><rect x="75" y="308" width="1" height="1"/><rect x="76" y="308" width="1" height="1"/><rect x="77" y="307" width="1" height="1"/><rect x="78" y="307" width="1" height="1"/><rect x="79" y="306" width="1" height="1"/><rect x="80" y="305" width="1" height="1"/><rect x="81" y="305" width="1" height="1"/><rect x="82" y="304" width="1" height="1"/><rect x="83" y="304" width="1" height="1"/><rect x="84" y="303" width="1" height="1"/><rect x="85" y="303" width="1" height="1"/><rect x="86" y="302" width="1" height="1"/><rect x="87" y="302" width="1" height="1"/><rect x="88" y="301" width="1" height="1"/><rect x="89" y="301" width="1" height="1"/><rect x="90" y="300" width="1" height="1"/><rect x="91" y="299" width="1" height="1"/><rect x="92" y="299" width="1" height="1"/><rect x="93" y="298" width="1" height="1"/><rect x="94" y="298" width="1" height="1"/><rect x="95" y="297" width="1" height="1"/><rect x="96" y="297" width="1" height="1"/><rect x="97" y="296" width="1" height="1"/><rect x="98" y="296" width="1" height="1"/><rect x="99" y="295" width="1" height="1"/><rect x="100" y="295" width="1" height="1"/><rect x="101" y="294" width="1" height="1"/><rect x="102" y="294" width="1" height="1"/><rect x="103" y="293" width="1" height="1"/><rect x="104" y="293" width="1" height="1"/><rect x="105" y="292" width="1" height="1"/><rect x="106" y="292" width="1" height="1"/><rect x="107" y="291" width="1" height="1"/><rect x="108" y="291" width="1" height="1"/><rect x="109" y="290" width="1" height="1"/><rect x="110" y="290" width="1" height="1"/><rect x="111" y="289" width="1" height="1"/><rect x="112" y="289" width="1" height="1"/><rect x="113" y="288" width="1" height="1"/><rect x="114" y="288" width="1" height="1"/><rect x="115" y="287" width="1" height="1"/><rect x="116" y="287" width="1" height="1"/><rect x="117" y="286" width="1" height="1"/><rect x="118" y="286" width="1" height="1"/><rect x="119" y="286" width="1" height="1"/><rect x="120" y="285" width="1" height="1"/><rect x="121" y="285" width="1" height="1"/><rect x="122" y="284" width="1" height="1"/><rect x="123" y="284" width="1" height="1"/><rect x="124" y="283" width="1" height="1"/><rect x="125" y="283" width="1" height="1"/><rect x="126" y="282" width="1" height="1"/><rect x="127" y="282" width="1" height="1"/><rect x="128" y="282" width="1" height="1"/><rect x="129" y="281" width="1" height="1"/><rect x="130" y="281" width="1" height="1"/><rect x="131" y="280" width="1" height="1"/><rect x="132" y="280" width="1" height="1"/><rect x="133" y="279" width="1" height="1"/><rect x="134" y="279" width="1" height="1"/><rect x="135" y="278" width="1" height="1"/><rect x="136" y="278" width="1" height="1"/><rect x="137" y="278" width="1" height="1"/><rect x="138" y="277" width="1" height="1"/><rect x="139" y="277" width="1" height="1"/><rect x="140" y="276" width="1" height="1"/><rect x="141" y="276" width="1" height="1"/><rect x="142" y="275" width="1" height="1"/><rect x="143" y="275" width="1" height="1"/><rect x="144" y="275" width="1" height="1"/><rect x="145" y="274" width="1" height="1"/><rect x="146" y="274" width="1" height="1"/><rect x="147" y="273" width="1" height="1"/><rect x="148" y="273" width="1" height="1"/><rect x="149" y="273" width="1" height="1"/><rect x="150" y="272" width="1" height="1"/><rect x="151" y="272" width="1" height="1"/><rect x="152" y="272" width="1" height="1"/><rect x="153" y="271" width="1" height="1"/><rect x="154" y="271" width="1" height="1"/><rect x="155" y="270" width="1" height="1"/><rect x="156" y="269" width="1" height="1"/><rect x="157" y="269" width="1" height="1"/><rect x="158" y="268" width="1" height="1"/><rect x="159" y="268" width="1" height="1"/><rect x="160" y="268" width="1" height="1"/><rect x="161" y="268" width="1" height="1"/><rect x="162" y="267" width="1" height="1"/><rect x="163" y="267" width="1" height="1"/><rect x="164" y="267" width="1" height="1"/><rect x="165" y="266" width="1" height="1"/><rect x="166" y="266" width="1" height="1"/><rect x="167" y="265" width="1" height="1"/><rect x="168" y="264" width="1" height="1"/><rect x="169" y="264" width="1" height="1"/><rect x="170" y="264" width="1" height="1"/><rect x="171" y="263" width="1" height="1"/><rect x="172" y="263" width="1" height="1"/><rect x="173" y="263" width="1" height="1"/><rect x="174" y="263" width="1" height="1"/><rect x="175" y="263" width="1" height="1"/><rect x="176" y="262" width="1" height="1"/><rect x="177" y="261" width="1" height="1"/><rect x="178" y="261" width="1" height="1"/><rect x="179" y="260" width="1" height="1"/><rect x="180" y="260" width="1" height="1"/><rect x="181" y="259" width="1" height="1"/><rect x="182" y="259" width="1" height="1"/><rect x="183" y="259" width="1" height="1"/><rect x="184" y="259" width="1" height="1"/><rect x="185" y="259" width="1" height="1"/><rect x="186" y="258" width="1" height="1"/><rect x="187" y="258" width="1" height="1"/><rect x="188" y="257" width="1" height="1"/><rect x="189" y="257" width="1" height="1"/><rect x="190" y="256" width="1" height="1"/><rect x="191" y="255" width="1" height="1"/><rect x="192" y="255" width="1" height="1"/><rect x="193" y="255" width="1" height="1"/><rect x="194" y="255" width="1" height="1"/><rect x="195" y="255" width="1" height="1"/><rect x="196" y="254" width="1" height="1"/><rect x="197" y="254" width="1" height="1"/><rect x="198" y="254" width="1" height="1"/><rect x="199" y="253" width="1" height="1"/><rect x="200" y="252" width="1" height="1"/><rect x="201" y="252" width="1" height="1"/><rect x="202" y="251" width="1" height="1"/><rect x="203" y="251" width="1" height="1"/><rect x="204" y="251" width="1" height="1"/><rect x="205" y="251" width="1" height="1"/><rect x="206" y="251" width="1" height="1"/><rect x="207" y="250" width="1" height="1"/><rect x="208" y="250" width="1" height="1"/><rect x="209" y="250" width="1" height="1"/><rect x="210" y="249" width="1" height="1"/><rect x="211" y="248" width="1" height="1"/><rect x="212" y="248" width="1" height="1"/><rect x="213" y="247" width="1" height="1"/><rect x="214" y="247" width="1" height="1"/><rect x="215" y="247" width="1" height="1"/><rect x="216" y="247" width="1" height="1"/><rect x="217" y="247" width="1" height="1"/><rect x="218" y="247" width="1" height="1"/><rect x="219" y="246" width="1" height="1"/><rect x="220" y="246" width="1" height="1"/><rect x="221" y="245" width="1" height="1"/><rect x="222" y="245" width="1" height="1"/><rect x="223" y="244" width="1" height="1"/><rect x="224" y="243" width="1" height="1"/><rect x="225" y="243" width="1" height="1"/><rect x="226" y="243" width="1" height="1"/><rect x="227" y="243" width="1" height="1"/><rect x="228" y="243" width="1" height="1"/><rect x="229" y="243" width="1" height="1"/><rect x="230" y="242" width="1" height="1"/><rect x="231" y="242" width="1" height="1"/><rect x="232" y="241" width="1" height="1"/><rect x="233" y="241" width="1" height="1"/><rect x="234" y="240" width="1" height="1"/><rect x="235" y="240" width="1" height="1"/><rect x="236" y="239" width="1" height="1"/><rect x="237" y="239" width="1" height="1"/><rect x="238" y="239" width="1" height="1"/><rect x="239" y="239" width="1" height="1"/><rect x="240" y="239" width="1" height="1"/><rect x="241" y="239" width="1" height="1"/><rect x="242" y="238" width="1" height="1"/><rect x="243" y="238" width="1" height="1"/><rect x="244" y="237" width="1" height="1"/><rect x="245" y="236" width="1" height="1"/><rect x="246" y="236" width="1" height="1"/><rect x="247" y="236" width="1" height="1"/><rect x="248" y="235" width="1" height="1"/><rect x="249" y="235" width="1" height="1"/><rect x="250" y="235" width="1" height="1"/><rect x="251" y="235" width="1" height="1"/><rect x="252" y="235" width="1" height="1"/><rect x="253" y="234" width="1" height="1"/><rect x="254" y="234" width="1" height="1"/><rect x="255" y="233" width="1" height="1"/><rect x="256" y="233" width="1" height="1"/><rect x="257" y="232" width="1" height="1"/><rect x="258" y="232" width="1" height="1"/><rect x="259" y="232" width="1" height="1"/><rect x="260" y="232" width="1" height="1"/><rect x="261" y="232" width="1" height="1"/><rect x="262" y="232" width="1" height="1"/><rect x="263" y="231" width="1" height="1"/><rect x="264" y="231" width="1" height="1"/><rect x="265" y="230" width="1" height="1"/><rect x="266" y="230" width="1" height="1"/><rect x="267" y="229" width="1" height="1"/><rect x="268" y="229" width="1" height="1"/><rect x="269" y="228" width="1" height="1"/><rect x="270" y="228" width="1" height="1"/><rect x="271" y="228" width="1" height="1"/><rect x="272" y="228" width="1" height="1"/><rect x="273" y="228" width="1" height="1"/><rect x="274" y="228" width="1" height="1"/><rect x="275" y="227" width="1" height="1"/><rect x="276" y="227" width="1" height="1"/><rect x="277" y="226" width="1" height="1"/><rect x="278" y="226" width="1" height="1"/><rect x="279" y="225" width="1" height="1"/><rect x="280" y="225" width="1" height="1"/><rect x="281" y="225" width="1" height="1"/><rect x="282" y="225" width="1" height="1"/><rect x="283" y="225" width="1" height="1"/><rect x="284" y="224" width="1" height="1"/><rect x="285" y="224" width="1" height="1"/><rect x="286" y="224" width="1" height="1"/><rect x="287" y="223" width="1" height="1"/><rect x="288" y="223" width="1" height="1"/><rect x="289" y="222" width="1" height="1"/><rect x="290" y="222" width="1" height="1"/><rect x="291" y="221" width="1" height="1"/><rect x="292" y="221" width="1" height="1"/><rect x="293" y="221" width="1" height="1"/><rect x="294" y="221" width="1" height="1"/><rect x="295" y="221" width="1" height="1"/><rect x="296" y="221" width="1" height="1"/><rect x="297" y="220" width="1" height="1"/><rect x="298" y="220" width="1" height="1"/><rect x="299" y="219" width="1" height="1"/><rect x="300" y="219" width="1" height="1"/><rect x="301" y="219" width="1" height="1"/><rect x="302" y="219" width="1" height="1"/><rect x="303" y="218" width="1" height="1"/><rect x="304" y="218" width="1" height="1"/><rect x="305" y="217" width="1" height="1"/><rect x="306" y="217" width="1" height="1"/><rect x="307" y="217" width="1" height="1"/><rect x="308" y="216" width="1" height="1"/><rect x="309" y="216" width="1" height="1"/><rect x="310" y="216" width="1" height="1"/><rect x="311" y="216" width="1" height="1"/><rect x="312" y="216" width="1" height="1"/><rect x="313" y="215" width="1" height="1"/><rect x="314" y="215" width="1" height="1"/><rect x="315" y="214" width="1" height="1"/><rect x="316" y="214" width="1" height="1"/><rect x="317" y="213" width="1" height="1"/><rect x="318" y="213" width="1" height="1"/><rect x="319" y="213" width="1" height="1"/><rect x="320" y="214" width="1" height="1"/><rect x="321" y="214" width="1" height="1"/><rect x="322" y="213" width="1" height="1"/><rect x="323" y="213" width="1" height="1"/><rect x="324" y="212" width="1" height="1"/><rect x="325" y="211" width="1" height="1"/><rect x="326" y="210" width="1" height="1"/><rect x="327" y="210" width="1" height="1"/><rect x="328" y="210" width="1" height="1"/><rect x="329" y="211" width="1" height="1"/><rect x="330" y="211" width="1" height="1"/><rect x="331" y="211" width="1" height="1"/><rect x="332" y="210" width="1" height="1"/><rect x="333" y="209" width="1" height="1"/><rect x="334" y="208" width="1" height="1"/><rect x="335" y="207" width="1" height="1"/><rect x="336" y="207" width="1" height="1"/><rect x="337" y="207" width="1" height="1"/><rect x="338" y="208" width="1" height="1"/><rect x="339" y="208" width="1" height="1"/><rect x="340" y="208" width="1" height="1"/><rect x="341" y="208" width="1" height="1"/><rect x="342" y="207" width="1" height="1"/><rect x="343" y="206" width="1" height="1"/><rect x="344" y="205" width="1" height="1"/><rect x="345" y="204" width="1" height="1"/><rect x="346" y="204" width="1" height="1"/><rect x="347" y="205" width="1" height="1"/><rect x="348" y="205" width="1" height="1"/><rect x="349" y="206" width="1" height="1"/><rect x="350" y="205" width="1" height="1"/><rect x="351" y="205" width="1" height="1"/><rect x="352" y="204" width="1" height="1"/><rect x="353" y="203" width="1" height="1"/><rect x="354" y="202" width="1" height="1"/><rect x="355" y="201" width="1" height="1"/><rect x="356" y="202" width="1" height="1"/><rect x="357" y="202" width="1" height="1"/><rect x="358" y="203" width="1" height="1"/><rect x="359" y="203" width="1" height="1"/><rect x="360" y="203" width="1" height="1"/><rect x="361" y="202" width="1" height="1"/><rect x="362" y="201" width="1" height="1"/><rect x="363" y="200" width="1" height="1"/><rect x="364" y="199" width="1" height="1"/><rect x="365" y="199" width="1" height="1"/><rect x="366" y="199" width="1" height="1"/><rect x="367" y="200" width="1" height="1"/><rect x="368" y="200" width="1" height="1"/><rect x="369" y="200" width="1" height="1"/><rect x="370" y="199" width="1" height="1"/><rect x="371" y="198" width="1" height="1"/><rect x="372" y="197" width="1" height="1"/><rect x="373" y="196" width="1" height="1"/><rect x="374" y="196" width="1" height="1"/><rect x="375" y="196" width="1" height="1"/><rect x="376" y="197" width="1" height="1"/><rect x="377" y="197" width="1" height="1"/><rect x="378" y="198" width="1" height="1"/><rect x="379" y="197" width="1" height="1"/><rect x="380" y="196" width="1" height="1"/><rect x="381" y="195" width="1" height="1"/><rect x="382" y="194" width="1" height="1"/><rect x="383" y="194" width="1" height="1"/><rect x="384" y="194" width="1" height="1"/><rect x="385" y="194" width="1" height="1"/><rect x="386" y="195" width="1" height="1"/><rect x="387" y="195" width="1" height="1"/><rect x="388" y="195" width="1" height="1"/><rect x="389" y="194" width="1" height="1"/><rect x="390" y="193" width="1" height="1"/><rect x="391" y="192" width="1" height="1"/><rect x="392" y="191" width="1" height="1"/></g>
<rect x="392" y="139" width="1" height="286" fill="#ff0000"/>
</svg>
<div class="t" style="left:0;width:38px;text-align:right;top:144px;font-size:12px;line-height:13px">48</div>
<svg class="a" style="left:38px;top:145px" width="9" height="10" viewBox="0 0 9 10"><path d="M1 1 L8 9 M8 1 L1 9" stroke="#000" stroke-width="1.1" fill="none"/></svg>
<div class="t" style="left:0;width:38px;text-align:right;top:190px;font-size:12px;line-height:13px">40</div>
<svg class="a" style="left:38px;top:191px" width="9" height="10" viewBox="0 0 9 10"><path d="M1 1 L8 9 M8 1 L1 9" stroke="#000" stroke-width="1.1" fill="none"/></svg>
<div class="t" style="left:0;width:38px;text-align:right;top:235px;font-size:12px;line-height:13px">32</div>
<svg class="a" style="left:38px;top:236px" width="9" height="10" viewBox="0 0 9 10"><path d="M1 1 L8 9 M8 1 L1 9" stroke="#000" stroke-width="1.1" fill="none"/></svg>
<div class="t" style="left:0;width:38px;text-align:right;top:281px;font-size:12px;line-height:13px">24</div>
<svg class="a" style="left:38px;top:282px" width="9" height="10" viewBox="0 0 9 10"><path d="M1 1 L8 9 M8 1 L1 9" stroke="#000" stroke-width="1.1" fill="none"/></svg>
<div class="t" style="left:0;width:38px;text-align:right;top:327px;font-size:12px;line-height:13px">16</div>
<svg class="a" style="left:38px;top:328px" width="9" height="10" viewBox="0 0 9 10"><path d="M1 1 L8 9 M8 1 L1 9" stroke="#000" stroke-width="1.1" fill="none"/></svg>
<div class="t" style="left:0;width:38px;text-align:right;top:373px;font-size:12px;line-height:13px">8</div>
<svg class="a" style="left:38px;top:374px" width="9" height="10" viewBox="0 0 9 10"><path d="M1 1 L8 9 M8 1 L1 9" stroke="#000" stroke-width="1.1" fill="none"/></svg>
<div class="t" style="left:50px;top:431px;font-size:12px">0</div>
<div class="t" style="left:78.625px;width:40px;text-align:center;top:431px;font-size:12px">10</div>
<div class="t" style="left:124.25px;width:40px;text-align:center;top:431px;font-size:12px">20</div>
<div class="t" style="left:169.875px;width:40px;text-align:center;top:431px;font-size:12px">30</div>
<div class="t" style="left:215.5px;width:40px;text-align:center;top:431px;font-size:12px">40</div>
<div class="t" style="left:261.125px;width:40px;text-align:center;top:431px;font-size:12px">50</div>
<div class="t" style="left:306.75px;width:40px;text-align:center;top:431px;font-size:12px">60</div>
<div class="t" style="left:352.375px;width:40px;text-align:center;top:431px;font-size:12px">70</div>
<div class="t" style="left:398.0px;width:40px;text-align:center;top:431px;font-size:12px">80</div>
<div class="t" style="left:422px;top:369px;font-size:12px">4</div>
<div class="t" style="left:422px;top:319px;font-size:12px">8</div>
<div class="t" style="left:422px;top:269px;font-size:12px">12</div>
<div class="t" style="left:422px;top:219px;font-size:12px">16</div>
<div class="t" style="left:422px;top:169px;font-size:12px">20</div>
<div class="a" style="left:14px;top:448px;width:422px;height:11px;border:1px solid #686868;border-radius:3px;background:#fff;box-shadow:inset 0 1px 0 #dcd8e0,inset 1px 0 0 #e4e2e8"></div>
<div class="a" style="left:18px;top:451px;width:6px;height:5px;background:linear-gradient(to bottom,#9cec9e 0%,#3ed842 30%,#22d028 60%,#7ee480 100%)"></div>
<div class="a" style="left:26px;top:451px;width:6px;height:5px;background:linear-gradient(to bottom,#9cec9e 0%,#3ed842 30%,#22d028 60%,#7ee480 100%)"></div>
<div class="a" style="left:34px;top:451px;width:6px;height:5px;background:linear-gradient(to bottom,#9cec9e 0%,#3ed842 30%,#22d028 60%,#7ee480 100%)"></div>
<div class="a" style="left:42px;top:451px;width:6px;height:5px;background:linear-gradient(to bottom,#9cec9e 0%,#3ed842 30%,#22d028 60%,#7ee480 100%)"></div>
<div class="a" style="left:50px;top:451px;width:6px;height:5px;background:linear-gradient(to bottom,#9cec9e 0%,#3ed842 30%,#22d028 60%,#7ee480 100%)"></div>
<div class="a" style="left:58px;top:451px;width:6px;height:5px;background:linear-gradient(to bottom,#9cec9e 0%,#3ed842 30%,#22d028 60%,#7ee480 100%)"></div>
<div class="a" style="left:66px;top:451px;width:6px;height:5px;background:linear-gradient(to bottom,#9cec9e 0%,#3ed842 30%,#22d028 60%,#7ee480 100%)"></div>
<div class="a" style="left:74px;top:451px;width:6px;height:5px;background:linear-gradient(to bottom,#9cec9e 0%,#3ed842 30%,#22d028 60%,#7ee480 100%)"></div>
<div class="a" style="left:82px;top:451px;width:6px;height:5px;background:linear-gradient(to bottom,#9cec9e 0%,#3ed842 30%,#22d028 60%,#7ee480 100%)"></div>
<div class="a" style="left:90px;top:451px;width:6px;height:5px;background:linear-gradient(to bottom,#9cec9e 0%,#3ed842 30%,#22d028 60%,#7ee480 100%)"></div>
<div class="a" style="left:98px;top:451px;width:6px;height:5px;background:linear-gradient(to bottom,#9cec9e 0%,#3ed842 30%,#22d028 60%,#7ee480 100%)"></div>
<div class="a" style="left:106px;top:451px;width:6px;height:5px;background:linear-gradient(to bottom,#9cec9e 0%,#3ed842 30%,#22d028 60%,#7ee480 100%)"></div>
<div class="a" style="left:114px;top:451px;width:6px;height:5px;background:linear-gradient(to bottom,#9cec9e 0%,#3ed842 30%,#22d028 60%,#7ee480 100%)"></div>
<div class="a" style="left:122px;top:451px;width:6px;height:5px;background:linear-gradient(to bottom,#9cec9e 0%,#3ed842 30%,#22d028 60%,#7ee480 100%)"></div>
<div class="a" style="left:130px;top:451px;width:6px;height:5px;background:linear-gradient(to bottom,#9cec9e 0%,#3ed842 30%,#22d028 60%,#7ee480 100%)"></div>
<div class="a" style="left:138px;top:451px;width:6px;height:5px;background:linear-gradient(to bottom,#9cec9e 0%,#3ed842 30%,#22d028 60%,#7ee480 100%)"></div>
<div class="a" style="left:146px;top:451px;width:6px;height:5px;background:linear-gradient(to bottom,#9cec9e 0%,#3ed842 30%,#22d028 60%,#7ee480 100%)"></div>
<div class="a" style="left:154px;top:451px;width:6px;height:5px;background:linear-gradient(to bottom,#9cec9e 0%,#3ed842 30%,#22d028 60%,#7ee480 100%)"></div>
<div class="a" style="left:162px;top:451px;width:6px;height:5px;background:linear-gradient(to bottom,#9cec9e 0%,#3ed842 30%,#22d028 60%,#7ee480 100%)"></div>
<div class="a" style="left:170px;top:451px;width:6px;height:5px;background:linear-gradient(to bottom,#9cec9e 0%,#3ed842 30%,#22d028 60%,#7ee480 100%)"></div>
<div class="a" style="left:178px;top:451px;width:6px;height:5px;background:linear-gradient(to bottom,#9cec9e 0%,#3ed842 30%,#22d028 60%,#7ee480 100%)"></div>
<div class="a" style="left:186px;top:451px;width:6px;height:5px;background:linear-gradient(to bottom,#9cec9e 0%,#3ed842 30%,#22d028 60%,#7ee480 100%)"></div>
<div class="a" style="left:194px;top:451px;width:6px;height:5px;background:linear-gradient(to bottom,#9cec9e 0%,#3ed842 30%,#22d028 60%,#7ee480 100%)"></div>
<div class="a" style="left:202px;top:451px;width:6px;height:5px;background:linear-gradient(to bottom,#9cec9e 0%,#3ed842 30%,#22d028 60%,#7ee480 100%)"></div>
<div class="a" style="left:210px;top:451px;width:6px;height:5px;background:linear-gradient(to bottom,#9cec9e 0%,#3ed842 30%,#22d028 60%,#7ee480 100%)"></div>
<div class="a" style="left:218px;top:451px;width:6px;height:5px;background:linear-gradient(to bottom,#9cec9e 0%,#3ed842 30%,#22d028 60%,#7ee480 100%)"></div>
<div class="a" style="left:226px;top:451px;width:6px;height:5px;background:linear-gradient(to bottom,#9cec9e 0%,#3ed842 30%,#22d028 60%,#7ee480 100%)"></div>
<div class="a" style="left:234px;top:451px;width:6px;height:5px;background:linear-gradient(to bottom,#9cec9e 0%,#3ed842 30%,#22d028 60%,#7ee480 100%)"></div>
<div class="a" style="left:242px;top:451px;width:6px;height:5px;background:linear-gradient(to bottom,#9cec9e 0%,#3ed842 30%,#22d028 60%,#7ee480 100%)"></div>
<div class="a" style="left:250px;top:451px;width:6px;height:5px;background:linear-gradient(to bottom,#9cec9e 0%,#3ed842 30%,#22d028 60%,#7ee480 100%)"></div>
<div class="a" style="left:258px;top:451px;width:6px;height:5px;background:linear-gradient(to bottom,#9cec9e 0%,#3ed842 30%,#22d028 60%,#7ee480 100%)"></div>
<div class="a" style="left:266px;top:451px;width:6px;height:5px;background:linear-gradient(to bottom,#9cec9e 0%,#3ed842 30%,#22d028 60%,#7ee480 100%)"></div>
<div class="a" style="left:274px;top:451px;width:6px;height:5px;background:linear-gradient(to bottom,#9cec9e 0%,#3ed842 30%,#22d028 60%,#7ee480 100%)"></div>
<div class="a" style="left:282px;top:451px;width:6px;height:5px;background:linear-gradient(to bottom,#9cec9e 0%,#3ed842 30%,#22d028 60%,#7ee480 100%)"></div>
<div class="a" style="left:290px;top:451px;width:6px;height:5px;background:linear-gradient(to bottom,#9cec9e 0%,#3ed842 30%,#22d028 60%,#7ee480 100%)"></div>
<div class="a" style="left:298px;top:451px;width:6px;height:5px;background:linear-gradient(to bottom,#9cec9e 0%,#3ed842 30%,#22d028 60%,#7ee480 100%)"></div>
<div class="a" style="left:306px;top:451px;width:6px;height:5px;background:linear-gradient(to bottom,#9cec9e 0%,#3ed842 30%,#22d028 60%,#7ee480 100%)"></div>
<div class="a" style="left:314px;top:451px;width:6px;height:5px;background:linear-gradient(to bottom,#9cec9e 0%,#3ed842 30%,#22d028 60%,#7ee480 100%)"></div>
<div class="a" style="left:322px;top:451px;width:6px;height:5px;background:linear-gradient(to bottom,#9cec9e 0%,#3ed842 30%,#22d028 60%,#7ee480 100%)"></div>
<div class="a" style="left:330px;top:451px;width:6px;height:5px;background:linear-gradient(to bottom,#9cec9e 0%,#3ed842 30%,#22d028 60%,#7ee480 100%)"></div>
<div class="a" style="left:338px;top:451px;width:6px;height:5px;background:linear-gradient(to bottom,#9cec9e 0%,#3ed842 30%,#22d028 60%,#7ee480 100%)"></div>
<div class="a" style="left:346px;top:451px;width:6px;height:5px;background:linear-gradient(to bottom,#9cec9e 0%,#3ed842 30%,#22d028 60%,#7ee480 100%)"></div>
<div class="a" style="left:354px;top:451px;width:6px;height:5px;background:linear-gradient(to bottom,#9cec9e 0%,#3ed842 30%,#22d028 60%,#7ee480 100%)"></div>
<div class="a" style="left:362px;top:451px;width:6px;height:5px;background:linear-gradient(to bottom,#9cec9e 0%,#3ed842 30%,#22d028 60%,#7ee480 100%)"></div>
<div class="a" style="left:370px;top:451px;width:6px;height:5px;background:linear-gradient(to bottom,#9cec9e 0%,#3ed842 30%,#22d028 60%,#7ee480 100%)"></div>
<div class="a" style="left:378px;top:451px;width:6px;height:5px;background:linear-gradient(to bottom,#9cec9e 0%,#3ed842 30%,#22d028 60%,#7ee480 100%)"></div>
<div class="a" style="left:386px;top:451px;width:6px;height:5px;background:linear-gradient(to bottom,#9cec9e 0%,#3ed842 30%,#22d028 60%,#7ee480 100%)"></div>
<div class="a" style="left:394px;top:451px;width:6px;height:5px;background:linear-gradient(to bottom,#9cec9e 0%,#3ed842 30%,#22d028 60%,#7ee480 100%)"></div>
<div class="a" style="left:402px;top:451px;width:6px;height:5px;background:linear-gradient(to bottom,#9cec9e 0%,#3ed842 30%,#22d028 60%,#7ee480 100%)"></div>
<div class="a" style="left:410px;top:451px;width:6px;height:5px;background:linear-gradient(to bottom,#9cec9e 0%,#3ed842 30%,#22d028 60%,#7ee480 100%)"></div>
<div class="a" style="left:418px;top:451px;width:6px;height:5px;background:linear-gradient(to bottom,#9cec9e 0%,#3ed842 30%,#22d028 60%,#7ee480 100%)"></div>
<div class="a" style="left:426px;top:451px;width:6px;height:5px;background:linear-gradient(to bottom,#9cec9e 0%,#3ed842 30%,#22d028 60%,#7ee480 100%)"></div>
<div class="a" style="left:14px;top:462px;width:422px;height:60px;border:1px solid #7f9db9;background:#fff"></div>
<div class="t" style="left:34px;top:465px;">[04:05:04]</div>
<div class="t" style="left:92px;top:465px;letter-spacing:-0.13px">Auswurf Zeit: 1.28 Sekunden</div>
<div class="t" style="left:34px;top:479px;">[04:05:17]</div>
<div class="t" style="left:92px;top:479px;letter-spacing:-0.13px">Lade Zeit: 13.34 Sekunden</div>
<div class="t" style="left:34px;top:493px;">[04:05:17]</div>
<div class="t" style="left:92px;top:493px;letter-spacing:-0.13px">Erkennungszeit: 0.01 Sekunden</div>
<div class="t" style="left:34px;top:507px;">[04:05:17]</div>
<div class="t" style="left:92px;top:507px;letter-spacing:-0.13px">Verstrichene Zeit:&nbsp;&nbsp;0:15</div>
<div class="a" style="left:418px;top:463px;width:16px;height:58px;background:linear-gradient(to right,#f0efe9 0%,#f3f2ed 50%,#fdfdfb 100%);border-left:1px solid #fafaf8"></div>
<div class="a" style="left:418px;top:464px;width:16px;height:16px;border:1px solid #fff;border-radius:3px;background:linear-gradient(135deg,#dde8fd 0%,#c8d8fb 50%,#b6cbf7 100%);box-shadow:inset -1px -1px 0 #a6bde9"></div>
<svg class="a" style="left:418px;top:464px" width="16" height="16" viewBox="0 0 16 16"><path d="M3.5 10 L8 5.5 L12.5 10" stroke="#4d6185" stroke-width="2.2" fill="none"/></svg>
<div class="a" style="left:418px;top:495px;width:16px;height:7px;border:1px solid #fff;border-radius:3px;background:linear-gradient(135deg,#dde8fd 0%,#c8d8fb 50%,#b6cbf7 100%);box-shadow:inset -1px -1px 0 #a6bde9"></div>
<div class="a" style="left:418px;top:503px;width:16px;height:17px;border:1px solid #fff;border-radius:3px;background:linear-gradient(135deg,#dde8fd 0%,#c8d8fb 50%,#b6cbf7 100%);box-shadow:inset -1px -1px 0 #a6bde9"></div>
<svg class="a" style="left:418px;top:503px" width="16" height="17" viewBox="0 0 16 17"><path d="M3.5 6.5 L8 11 L12.5 6.5" stroke="#4d6185" stroke-width="2.2" fill="none"/></svg>
<svg class="a" style="left:0;top:0" width="645" height="531" viewBox="0 0 645 531"><path d="M451 132.5 H447.5 L444.5 135.5 V298.5 L447.5 301.5 H534.5 L537.5 298.5 V135.5 L534.5 132.5 H532" fill="none" stroke="#d0d0bf" stroke-width="1" shape-rendering="crispEdges"/><path d="M549 132.5 H545.5 L542.5 135.5 V254.5 L545.5 257.5 H626.5 L629.5 254.5 V135.5 L626.5 132.5 H616" fill="none" stroke="#d0d0bf" stroke-width="1" shape-rendering="crispEdges"/><path d="M451 319.5 H447.5 L444.5 322.5 V408.5 L447.5 411.5 H534.5 L537.5 408.5 V322.5 L534.5 319.5 H515" fill="none" stroke="#d0d0bf" stroke-width="1" shape-rendering="crispEdges"/><path d="M550 275.5 H545.5 L542.5 278.5 V439.5 L545.5 442.5 H626.5 L629.5 439.5 V278.5 L626.5 275.5 H625" fill="none" stroke="#d0d0bf" stroke-width="1" shape-rendering="crispEdges"/><path d="M451 429.5 H447.5 L444.5 432.5 V518.5 L447.5 521.5 H534.5 L537.5 518.5 V432.5 L534.5 429.5 H492" fill="none" stroke="#d0d0bf" stroke-width="1" shape-rendering="crispEdges"/><path d="M550 460.5 H545.5 L542.5 463.5 V517.5 L545.5 520.5 H626.5 L629.5 517.5 V463.5 L626.5 460.5 H610" fill="none" stroke="#d0d0bf" stroke-width="1" shape-rendering="crispEdges"/></svg>
<div class="t" style="left:453.5px;top:126px;color:#0046d5">Geschwindigkeit</div>
<div class="t" style="left:550px;top:126px;color:#0046d5">Zugriffszeiten</div>
<div class="t" style="left:453.5px;top:313px;color:#0046d5">DAE Qualität</div>
<div class="t" style="left:551px;top:269px;color:#0046d5">CPU Belastung</div>
<div class="t" style="left:453.5px;top:423px;color:#0046d5">Disktyp:</div>
<div class="t" style="left:551px;top:454px;color:#0046d5">Schnittstelle</div>
<div class="t" style="left:430.5px;width:120px;text-align:center;top:143px;">Durchschnitt</div>
<div class="a" style="left:461px;top:155px;width:59px;height:18px;background:#000;border-left:1px solid #aca899;border-top:1px solid #aca899;border-right:1px solid #fff;border-bottom:1px solid #fff"></div>
<div class="v" style="left:461px;width:59px;top:156px;">30.71x</div>
<div class="t" style="left:430.5px;width:120px;text-align:center;top:182px;">Start:</div>
<div class="a" style="left:461px;top:194px;width:59px;height:18px;background:#000;border-left:1px solid #aca899;border-top:1px solid #aca899;border-right:1px solid #fff;border-bottom:1px solid #fff"></div>
<div class="v" style="left:461px;width:59px;top:195px;">18.06x</div>
<div class="t" style="left:430.5px;width:120px;text-align:center;top:220px;">Ende:</div>
<div class="a" style="left:461px;top:232px;width:59px;height:18px;background:#000;border-left:1px solid #aca899;border-top:1px solid #aca899;border-right:1px solid #fff;border-bottom:1px solid #fff"></div>
<div class="v" style="left:461px;width:59px;top:233px;">40.36x</div>
<div class="t" style="left:430.5px;width:120px;text-align:center;top:257px;">Typ:</div>
<div class="a" style="left:461px;top:272px;width:59px;height:18px;background:#000;border-left:1px solid #aca899;border-top:1px solid #aca899;border-right:1px solid #fff;border-bottom:1px solid #fff"></div>
<div class="v" style="left:461px;width:59px;top:273px;">CAV</div>
<div class="t" style="left:524.7px;width:120px;text-align:center;top:143px;">Zufällig:</div>
<div class="a" style="left:556px;top:155px;width:59px;height:18px;background:#000;border-left:1px solid #aca899;border-top:1px solid #aca899;border-right:1px solid #fff;border-bottom:1px solid #fff"></div>
<div class="v" style="left:556px;width:59px;top:156px;">73 ms</div>
<div class="t" style="left:524.7px;width:120px;text-align:center;top:182px;">1/3:</div>
<div class="a" style="left:556px;top:194px;width:59px;height:18px;background:#000;border-left:1px solid #aca899;border-top:1px solid #aca899;border-right:1px solid #fff;border-bottom:1px solid #fff"></div>
<div class="v" style="left:556px;width:59px;top:195px;">80 ms</div>
<div class="t" style="left:524.7px;width:120px;text-align:center;top:218px;">Voll:</div>
<div class="a" style="left:556px;top:230px;width:59px;height:18px;background:#000;border-left:1px solid #aca899;border-top:1px solid #aca899;border-right:1px solid #fff;border-bottom:1px solid #fff"></div>
<div class="v" style="left:556px;width:59px;top:231px;">121 ms</div>
<div class="t" style="left:524.7px;width:120px;text-align:center;top:286px;">1 x:</div>
<div class="a" style="left:556px;top:298px;width:59px;height:18px;background:#000;border-left:1px solid #aca899;border-top:1px solid #aca899;border-right:1px solid #fff;border-bottom:1px solid #fff"></div>
<div class="v" style="left:556px;width:59px;top:299px;">1 %</div>
<div class="t" style="left:524.7px;width:120px;text-align:center;top:325px;">2 x:</div>
<div class="a" style="left:556px;top:337px;width:59px;height:18px;background:#000;border-left:1px solid #aca899;border-top:1px solid #aca899;border-right:1px solid #fff;border-bottom:1px solid #fff"></div>
<div class="v" style="left:556px;width:59px;top:338px;">2 %</div>
<div class="t" style="left:524.7px;width:120px;text-align:center;top:366px;">4 x:</div>
<div class="a" style="left:556px;top:378px;width:59px;height:18px;background:#000;border-left:1px solid #aca899;border-top:1px solid #aca899;border-right:1px solid #fff;border-bottom:1px solid #fff"></div>
<div class="v" style="left:556px;width:59px;top:379px;">7 %</div>
<div class="t" style="left:524.7px;width:120px;text-align:center;top:403px;">8 x:</div>
<div class="a" style="left:556px;top:415px;width:59px;height:18px;background:#000;border-left:1px solid #aca899;border-top:1px solid #aca899;border-right:1px solid #fff;border-bottom:1px solid #fff"></div>
<div class="v" style="left:556px;width:59px;top:416px;">8 %</div>
<div class="a" style="left:461px;top:336px;width:59px;height:18px;background:#000;border-left:1px solid #aca899;border-top:1px solid #aca899;border-right:1px solid #fff;border-bottom:1px solid #fff"></div>
<div class="v" style="left:461px;width:59px;top:337px;">10</div>
<div class="t" style="left:430.5px;width:120px;text-align:center;top:363px;">Genauer</div>
<div class="t" style="left:430.5px;width:120px;text-align:center;top:376px;">Stream</div>
<div class="a" style="left:485px;top:394px;width:13px;height:13px;border:1px solid #1c5180;background:linear-gradient(135deg,#dcdcd7 0%,#fff 100%)"></div>
<svg class="a" style="left:485px;top:394px" width="13" height="13" viewBox="0 0 13 13"><path d="M3 6 L5.3 8.5 L10 3.5" stroke="#21a121" stroke-width="2" fill="none"/></svg>
<div class="t" style="left:430.5px;width:120px;text-align:center;top:437px;">Typ:</div>
<div class="a" style="left:458px;top:451px;width:65px;height:18px;background:#000;border-left:1px solid #aca899;border-top:1px solid #aca899;border-right:1px solid #fff;border-bottom:1px solid #fff"></div>
<div class="v" style="left:458px;width:65px;top:452px;letter-spacing:-0.3px">Audio CD</div>
<div class="t" style="left:430.5px;width:120px;text-align:center;top:476px;">Länge:</div>
<div class="a" style="left:458px;top:492px;width:65px;height:18px;background:#000;border-left:1px solid #aca899;border-top:1px solid #aca899;border-right:1px solid #fff;border-bottom:1px solid #fff"></div>
<div class="v" style="left:458px;width:65px;top:493px;">75:26.42</div>
<div class="t" style="left:524.7px;width:120px;text-align:center;top:476px;">Burst-Rate:</div>
<div class="a" style="left:556px;top:492px;width:59px;height:18px;background:#000;border-left:1px solid #aca899;border-top:1px solid #aca899;border-right:1px solid #fff;border-bottom:1px solid #fff"></div>
<div class="v" style="left:556px;width:59px;top:493px;">18 MB/s</div>
</body></html>
